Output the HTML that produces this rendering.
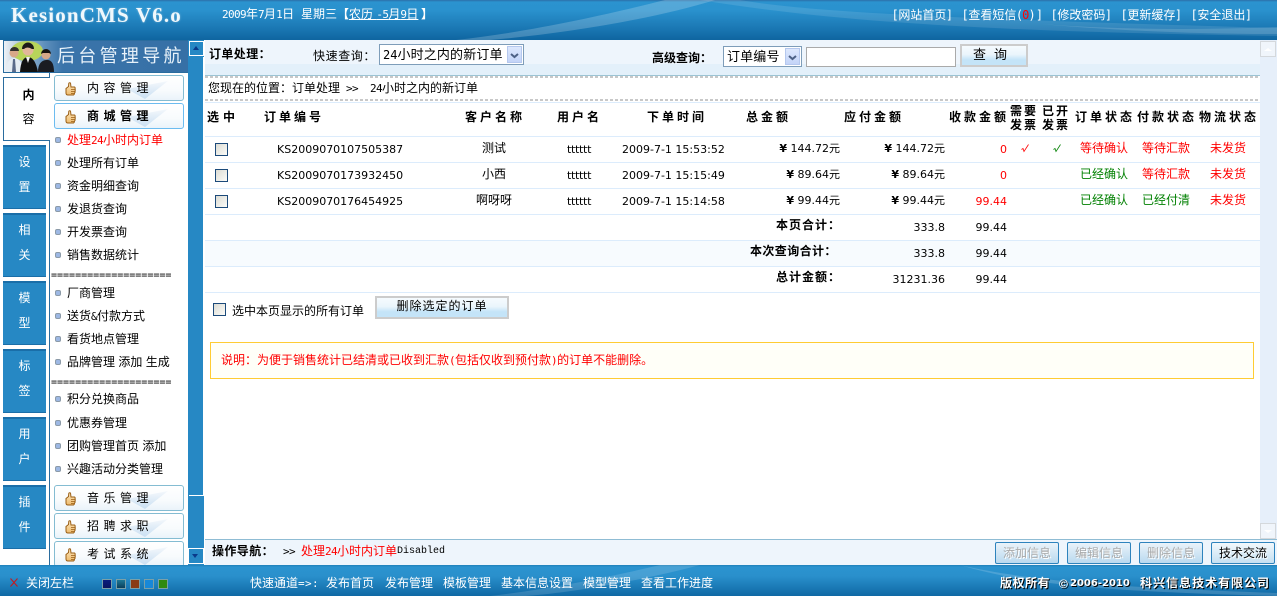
<!DOCTYPE html>
<html><head><meta charset="utf-8"><title>KesionCMS</title>
<style>
html,body{margin:0;padding:0;width:1277px;height:596px;overflow:hidden;background:#fff}
body{position:relative;font:12px/14px "Liberation Sans","WenQuanYi Zen Hei","Noto Sans CJK SC",sans-serif;color:#000}
div,span,svg{position:absolute;white-space:nowrap;display:block}
tt{font:11px/14px "DejaVu Sans Mono",monospace;letter-spacing:-.62px}
.k tt{letter-spacing:.1px;font-size:12px;margin:0 -.5px}
.a{position:absolute}
.b{font-weight:bold}
.h{font-weight:bold;letter-spacing:3px;top:110px}
.n{font-family:"DejaVu Sans",sans-serif;font-size:11px}
.r{color:#f00}.g{color:#008000}.w{color:#fff}
.tab{left:3px;width:43px;height:61px;background:#2688c4;border-top:2px solid #1a6ea8;border-bottom:1px solid #1a6ea8;color:#fff;text-align:center;line-height:30px}
.tab span{position:static;display:block}
.tab span+span{margin-top:-5px}
.mb{left:54px;width:128px;height:24px;border:1px solid #84bcd2;border-radius:3px;background:linear-gradient(#fff 0,#f8fbfd 60%,#eaf3fa);overflow:hidden}
.mb b{position:absolute;left:32px;top:5px;font-weight:normal;letter-spacing:4.5px;z-index:2}
.mb svg.t{left:10px;top:6px;z-index:2}
.mb svg.s{left:0;top:0}
.bu{left:55px;width:6px;height:6px;background:#9db8e4;border:1px solid #8b9aa8;border-radius:2px;box-sizing:border-box}
.ln{left:205px;width:1055px;height:1px;background:#dcecfc}
.cb{width:13px;height:13px;box-sizing:border-box;border:1px solid #1c4a7a;background:linear-gradient(135deg,#dcdcd4,#fbfbf8)}
.btn{background:linear-gradient(#f6fbfe 0,#eaf5fc 45%,#c4e4f8 72%,#c4e4f8);border:2px solid #ccc;box-sizing:border-box;text-align:center}
.nb{top:542px;width:64px;height:22px;box-sizing:border-box;border:1px solid #2e83bd;border-radius:2px;background:linear-gradient(#eaf3fa,#b9d9ef);color:#aaa;text-align:center;line-height:20px;text-shadow:1px 1px 0 #fff}
.sel{background:#fff;border:1px solid #7e9db9;box-sizing:border-box;font-size:13px;letter-spacing:.15px}
.ar{right:1px;top:1px;bottom:1px;width:15px;background:linear-gradient(#dde8fd,#c3d4f8);border:1px solid #b5c8ee;box-sizing:border-box}
.dash{left:205px;width:1055px;height:2px;background:repeating-linear-gradient(90deg,#c8c8c8 0 3px,#fff 3px 5px)}
.sq{top:579px;width:10px;height:10px;border:1px solid #7aa0a8;box-sizing:border-box}
.cp{top:576px;font-weight:bold;color:#fff;text-shadow:1px 1px 0 #000}
</style></head><body>

<svg width="0" height="0" style="left:0;top:0"><defs>
<linearGradient id="sw" x1="0" x2="0" y1="0" y2="1"><stop offset="0" stop-color="#f4f8fc"/><stop offset="1" stop-color="#c9dff2"/></linearGradient>
<linearGradient id="th" x1="0" x2="0" y1="0" y2="1"><stop offset="0" stop-color="#fbe7bf"/><stop offset="1" stop-color="#eebb6e"/></linearGradient>
<symbol id="tm" viewBox="0 0 11 14"><path d="M1 6.500L3.500 4.500L3.800 1.200Q4.500 .4 5.500 1L6 5H9.500Q10.500 5.500 10 7Q10.600 8 10 9Q10.400 10.500 9.500 11Q9.600 12.500 8.500 13H3Q1 13 1 11Z" fill="url(#th)" stroke="#9a5e14"/><path d="M6 7.500H10M6 9.500H10M6 11.500H9" stroke="#9a5e14" stroke-width=".8" fill="none"/></symbol>
<symbol id="sm" viewBox="0 0 128 24"><path d="M72 13L113 5L90 23Z" fill="url(#sw)"/></symbol>
</defs></svg>

<!-- header -->
<div style="left:0;top:0;width:1277px;height:40px;background:linear-gradient(#2c6fa8 0,#2b93cf 2px,#2a92ce 25%,#1b78b4 70%,#0f65a0);overflow:hidden">
<svg width="1277" height="40" style="left:0;top:0"><path d="M456 40C530 32 610 14 665 0H715C650 20 560 34 490 40Z" fill="#fff" opacity=".2"/><path d="M740 0C820 14 1000 20 1277 28V36C1040 32 860 26 700 0Z" fill="#fff" opacity=".11"/><path d="M1040 24C1120 30 1200 30 1277 27V34C1190 34 1110 30 1040 24Z" fill="#fff" opacity=".14"/></svg>
</div>
<span class="w b" style="left:11px;top:4px;font:bold 21px/22px 'Liberation Serif',serif;letter-spacing:1.150px;color:#f0f8fc;text-shadow:0 0 2px rgba(255,255,255,.4)">KesionCMS V6.o</span>
<span class="w" style="left:222px;top:7px"><tt>2009</tt>年<tt>7</tt>月<tt>1</tt>日</span>
<span class="w" style="left:301px;top:7px">星期三</span>
<span class="w b" style="left:337px;top:7px">【</span>
<span class="w" style="left:349px;top:7px"><u>农历 <tt>-5</tt>月<tt>9</tt>日</u></span>
<span class="w b" style="left:421px;top:7px">】</span>
<span class="w k" style="left:892px;top:8px"><tt>[</tt>网站首页<tt>]</tt></span>
<span class="w k" style="left:962px;top:8px"><tt>[</tt>查看短信<tt>(</tt><tt class="r">0</tt><tt>)]</tt></span>
<span class="w k" style="left:1051px;top:8px"><tt>[</tt>修改密码<tt>]</tt></span>
<span class="w k" style="left:1121px;top:8px"><tt>[</tt>更新缓存<tt>]</tt></span>
<span class="w k" style="left:1191px;top:8px"><tt>[</tt>安全退出<tt>]</tt></span>

<!-- logo -->
<div style="left:3px;top:40px;width:186px;height:33px;background:linear-gradient(90deg,#eef2f6 0,#a8c0d8 10%,#5f90bc 22%,#3a74aa 32%,#3670a6);border:1px solid #2a6c9e;box-sizing:border-box;overflow:hidden">
<svg width="52" height="31" style="left:0;top:0"><ellipse cx="23" cy="10" rx="16" ry="10" fill="#b8d45a"/><circle cx="10" cy="12" r="4.500" fill="#d8a888"/><path d="M6 10a4.500 4 0 0 1 9 0z" fill="#33302c"/><path d="M2 31q0-13 8-14 9 1 9 14z" fill="#e6edf4"/><path d="M9 18h2l1 13H8z" fill="#5a6a8a"/><circle cx="24" cy="9" r="5.500" fill="#e2b79a"/><path d="M18 8a6 6.500 0 0 1 12 0l-2 0q-5-3-8 0z" fill="#1e1a18"/><path d="M16 31q1-15 8-15t10 15z" fill="#111"/><path d="M22 16h4l-2 6z" fill="#f4f4f4"/><circle cx="42" cy="14" r="4.500" fill="#d8a888"/><path d="M37 13a5 5 0 0 1 10 0l-2-1h-6z" fill="#181410"/><path d="M34 31q0-11 8-12t8 12z" fill="#1a1c22"/></svg>
</div>
<span class="w" style="left:57px;top:45px;font-size:18px;line-height:22px;letter-spacing:3.300px;color:#e8f2fa">后台管理导航</span>

<!-- tabs -->
<div style="left:3px;top:77px;width:47px;height:64px;box-sizing:border-box;border:1px solid #2a6c9e;border-right:0;background:#fff;z-index:2;text-align:center;line-height:24px;font-weight:bold;padding-top:5px;padding-left:3px"><span style="position:static">内</span><span style="position:static;font-weight:normal">容</span></div>
<div class="a" style="left:49px;top:72px;width:1px;height:493px;background:#2a6c9e"></div>
<div class="tab" style="top:145px"><span>设</span><span>置</span></div>
<div class="tab" style="top:213px"><span>相</span><span>关</span></div>
<div class="tab" style="top:281px"><span>模</span><span>型</span></div>
<div class="tab" style="top:349px"><span>标</span><span>签</span></div>
<div class="tab" style="top:417px"><span>用</span><span>户</span></div>
<div class="tab" style="top:485px"><span>插</span><span>件</span></div>

<!-- left menu -->
<div class="mb" style="top:75px"><svg class="s" width="128" height="24"><use href="#sm"/></svg><svg class="t" width="11" height="14"><use href="#tm"/></svg><b>内容管理</b></div>
<div class="mb" style="top:103px;border-color:#6cbcf0"><svg class="s" width="128" height="24"><use href="#sm"/></svg><svg class="t" width="11" height="14"><use href="#tm"/></svg><b style="font-weight:bold">商城管理</b></div>

<div class="bu" style="top:137px"></div><span class="r" style="left:67px;top:133px">处理<tt>24</tt>小时内订单</span>
<div class="bu" style="top:160px"></div><span style="left:67px;top:156px">处理所有订单</span>
<div class="bu" style="top:183px"></div><span style="left:67px;top:179px">资金明细查询</span>
<div class="bu" style="top:206px"></div><span style="left:67px;top:202px">发退货查询</span>
<div class="bu" style="top:229px"></div><span style="left:67px;top:225px">开发票查询</span>
<div class="bu" style="top:252px"></div><span style="left:67px;top:248px">销售数据统计</span>
<span style="left:51px;top:269px;font-family:'DejaVu Sans Mono','Liberation Mono',monospace;font-size:10px;letter-spacing:0">====================</span>
<div class="bu" style="top:290px"></div><span style="left:67px;top:286px">厂商管理</span>
<div class="bu" style="top:313px"></div><span style="left:67px;top:309px">送货<tt>&amp;</tt>付款方式</span>
<div class="bu" style="top:336px"></div><span style="left:67px;top:332px">看货地点管理</span>
<div class="bu" style="top:359px"></div><span style="left:67px;top:355px">品牌管理 <tt> </tt>添加 <tt> </tt>生成</span>
<span style="left:51px;top:376px;font-family:'DejaVu Sans Mono','Liberation Mono',monospace;font-size:10px">====================</span>
<div class="bu" style="top:396px"></div><span style="left:67px;top:392px">积分兑换商品</span>
<div class="bu" style="top:420px"></div><span style="left:67px;top:416px">优惠券管理</span>
<div class="bu" style="top:443px"></div><span style="left:67px;top:439px">团购管理首页 <tt> </tt>添加</span>
<div class="bu" style="top:466px"></div><span style="left:67px;top:462px">兴趣活动分类管理</span>
<div class="mb" style="top:485px"><svg class="s" width="128" height="24"><use href="#sm"/></svg><svg class="t" width="11" height="14"><use href="#tm"/></svg><b>音乐管理</b></div>
<div class="mb" style="top:513px"><svg class="s" width="128" height="24"><use href="#sm"/></svg><svg class="t" width="11" height="14"><use href="#tm"/></svg><b>招聘求职</b></div>
<div style="left:54px;top:541px;width:130px;height:24px;overflow:hidden"><div class="mb" style="left:0;top:0"><svg class="s" width="128" height="24"><use href="#sm"/></svg><svg class="t" width="11" height="14"><use href="#tm"/></svg><b>考试系统</b></div></div>

<!-- left scrollbar -->
<div style="left:188px;top:40px;width:16px;height:525px;background:#2688c4"></div>
<div style="left:189px;top:41px;width:15px;height:15px;border:1px solid #fff;box-sizing:border-box;background:#2688c4"><div style="left:3px;top:4px;width:0;height:0;border:3px solid transparent;border-bottom:4px solid #0a3a8a;border-top:0"></div></div>
<div style="left:189px;top:57px;width:15px;height:439px;background:#2688c4;border-right:1px solid #fff;border-bottom:1px solid #fff;box-sizing:border-box"></div>
<div style="left:204px;top:40px;width:1px;height:525px;background:#fff"></div>
<div style="left:188px;top:548px;width:16px;height:16px;border:1px solid #fff;box-sizing:border-box;background:#2688c4"><div style="left:3px;top:5px;width:0;height:0;border:3px solid transparent;border-top:4px solid #0a3a8a;border-bottom:0"></div></div>

<!-- toolbar -->
<div style="left:205px;top:40px;width:1055px;height:24px;background:#eef5fc"></div>
<div style="left:205px;top:64px;width:1055px;height:11px;background:#e3f0fa"></div>
<div style="left:205px;top:75px;width:1055px;height:1px;background:#9cc4d4"></div>
<div class="dash" style="top:76px"></div>
<div class="dash" style="top:99px"></div>
<span class="b" style="left:209px;top:47px;letter-spacing:.4px">订单处理：</span>
<span style="left:313px;top:49px;letter-spacing:.6px">快速查询：</span>
<div class="sel" style="left:379px;top:44px;width:145px;height:21px"><span style="left:3px;top:3px"><tt style="font-size:12px;letter-spacing:0">24</tt>小时之内的新订单</span><div class="ar"><svg width="9" height="6" style="left:2px;top:6px"><path d="M1 1l3.500 3L8 1" fill="none" stroke="#4d6185" stroke-width="2"/></svg></div></div>
<span class="b" style="left:652px;top:51px">高级查询：</span>
<div class="sel" style="left:723px;top:46px;width:79px;height:21px"><span style="left:3px;top:3px">订单编号</span><div class="ar"><svg width="9" height="6" style="left:2px;top:6px"><path d="M1 1l3.500 3L8 1" fill="none" stroke="#4d6185" stroke-width="2"/></svg></div></div>
<div style="left:806px;top:47px;width:150px;height:20px;background:#fff;border:1px solid #aaa;box-sizing:border-box"></div>
<div class="btn" style="left:960px;top:44px;width:68px;height:23px;line-height:18px;font-size:13px;letter-spacing:8px">查询</div>

<!-- breadcrumb -->
<span style="left:208px;top:81px">您现在的位置：订单处理</span>
<span style="left:346px;top:81px"><tt>&gt;&gt;</tt></span>
<span style="left:370px;top:81px"><tt>24</tt>小时之内的新订单</span>

<!-- table lines -->
<div class="a" style="left:205px;top:241px;width:1055px;height:25px;background:#f7fbfe"></div>
<div class="ln" style="top:136px"></div><div class="ln" style="top:162px"></div><div class="ln" style="top:188px"></div><div class="ln" style="top:214px"></div><div class="ln" style="top:240px"></div><div class="ln" style="top:266px"></div><div class="ln" style="top:292px"></div>
<div class="ln" style="top:102px"></div>

<!-- table head -->
<span class="h" style="left:207px;letter-spacing:4px">选中</span>
<span class="h" style="left:264px">订单编号</span>
<span class="h" style="left:465px">客户名称</span>
<span class="h" style="left:557px">用户名</span>
<span class="h" style="left:647px">下单时间</span>
<span class="h" style="left:746px">总金额</span>
<span class="h" style="left:844px">应付金额</span>
<span class="h" style="left:949px">收款金额</span>
<span class="b" style="left:1010px;top:104px;letter-spacing:2px;line-height:14px;white-space:normal;width:30px">需要发票</span>
<span class="b" style="left:1042px;top:104px;letter-spacing:2px;line-height:14px;white-space:normal;width:30px">已开发票</span>
<span class="h" style="left:1075px">订单状态</span>
<span class="h" style="left:1137px">付款状态</span>
<span class="h" style="left:1199px">物流状态</span>

<!-- rows -->
<div class="cb" style="left:215px;top:143px"></div><div class="cb" style="left:215px;top:169px"></div><div class="cb" style="left:215px;top:195px"></div>
<span class="n" style="left:277px;top:143px">KS2009070107505387</span>
<span class="n" style="left:277px;top:169px">KS2009070173932450</span>
<span class="n" style="left:277px;top:195px">KS2009070176454925</span>
<span style="left:482px;top:141px">测试</span><span style="left:482px;top:167px">小西</span><span style="left:476px;top:193px">啊呀呀</span>
<span class="n" style="left:567px;top:143px;letter-spacing:-.3px">tttttt</span><span class="n" style="left:567px;top:169px;letter-spacing:-.3px">tttttt</span><span class="n" style="left:567px;top:195px;letter-spacing:-.3px">tttttt</span>
<span class="n" style="left:622px;top:143px">2009-7-1 15:53:52</span>
<span class="n" style="left:622px;top:169px">2009-7-1 15:15:49</span>
<span class="n" style="left:622px;top:195px">2009-7-1 15:14:58</span>
<span class="n" style="right:437px;top:142px"><b>¥</b> 144.72元</span>
<span class="n" style="right:437px;top:168px"><b>¥</b> 89.64元</span>
<span class="n" style="right:437px;top:194px"><b>¥</b> 99.44元</span>
<span class="n" style="right:332px;top:142px"><b>¥</b> 144.72元</span>
<span class="n" style="right:332px;top:168px"><b>¥</b> 89.64元</span>
<span class="n" style="right:332px;top:194px"><b>¥</b> 99.44元</span>
<span class="n r" style="right:270px;top:143px">0</span>
<span class="n r" style="right:270px;top:169px">0</span>
<span class="n r" style="right:270px;top:195px">99.44</span>
<svg width="8" height="9" style="left:1021px;top:144px"><path d="M.5 5.500L2 4.500L3 7.500L7.500 .5" fill="none" stroke="#f00" stroke-width=".8"/></svg>
<svg width="8" height="9" style="left:1053px;top:144px"><path d="M.5 5.500L2 4.500L3 7.500L7.500 .5" fill="none" stroke="#008000" stroke-width=".8"/></svg>
<span class="r" style="left:1080px;top:141px">等待确认</span><span class="r" style="left:1142px;top:141px">等待汇款</span><span class="r" style="left:1210px;top:141px">未发货</span>
<span class="g" style="left:1080px;top:167px">已经确认</span><span class="r" style="left:1142px;top:167px">等待汇款</span><span class="r" style="left:1210px;top:167px">未发货</span>
<span class="g" style="left:1080px;top:193px">已经确认</span><span class="g" style="left:1142px;top:193px">已经付清</span><span class="r" style="left:1210px;top:193px">未发货</span>

<!-- totals -->
<span class="b" style="left:776px;top:218px;letter-spacing:1px">本页合计：</span>
<span class="b" style="left:750px;top:244px;letter-spacing:.4px">本次查询合计：</span>
<span class="b" style="left:776px;top:270px;letter-spacing:1px">总计金额：</span>
<span class="n" style="right:332px;top:221px">333.8</span><span class="n" style="right:270px;top:221px">99.44</span>
<span class="n" style="right:332px;top:247px">333.8</span><span class="n" style="right:270px;top:247px">99.44</span>
<span class="n" style="right:332px;top:273px">31231.36</span><span class="n" style="right:270px;top:273px">99.44</span>

<div class="cb" style="left:213px;top:303px"></div>
<span style="left:232px;top:304px">选中本页显示的所有订单</span>
<div class="btn" style="left:375px;top:296px;width:134px;height:23px;line-height:17px;letter-spacing:1px">删除选定的订单</div>

<div style="left:210px;top:342px;width:1044px;height:37px;box-sizing:border-box;border:1px solid #fc3;background:#fffff8"></div>
<span class="r" style="left:221px;top:353px">说明：为便于销售统计已结清或已收到汇款<tt>(</tt>包括仅收到预付款<tt>)</tt>的订单不能删除。</span>

<!-- right scrollbar -->
<div style="left:1260px;top:40px;width:17px;height:499px;background:#e6effa"></div>
<div style="left:1260px;top:41px;width:16px;height:16px;border:1px solid #d4d8dc;box-sizing:border-box;background:#f0f5fb"><div style="left:3px;top:6px;width:0;height:0;border:4px solid transparent;border-bottom:3px solid #fff;border-top:0"></div></div>
<div style="left:1260px;top:523px;width:16px;height:16px;border:1px solid #d4d8dc;box-sizing:border-box;background:#f0f5fb"><div style="left:3px;top:6px;width:0;height:0;border:4px solid transparent;border-top:3px solid #fff;border-bottom:0"></div></div>

<!-- bottom nav -->
<div style="left:205px;top:539px;width:1072px;height:26px;background:#eef5fc;border-top:1px solid #8fbcd4;box-sizing:border-box"></div>
<span class="b" style="left:212px;top:544px;letter-spacing:.4px">操作导航：</span>
<span style="left:283px;top:544px"><tt>&gt;&gt;</tt></span>
<span class="r" style="left:301px;top:544px">处理<tt>24</tt>小时内订单</span>
<span style="left:397px;top:545px;font:10px/14px 'Liberation Mono',monospace">Disabled</span>
<div class="nb" style="left:995px">添加信息</div>
<div class="nb" style="left:1067px">编辑信息</div>
<div class="nb" style="left:1139px">删除信息</div>
<div class="nb" style="left:1211px;color:#000;background:linear-gradient(#f2f8fc,#c4e0f2)">技术交流</div>

<!-- footer -->
<div style="left:0;top:565px;width:1277px;height:31px;background:linear-gradient(#1f7fb8 0,#2b93cf 2px,#2a90cc 35%,#0f68a4);overflow:hidden">
<svg width="1277" height="31" style="left:0;top:0"><path d="M490 31C550 24 610 12 660 0H700C640 16 570 28 525 31Z" fill="#fff" opacity=".14"/><path d="M960 0C1020 14 1100 22 1277 28V31C1090 26 1020 18 960 0Z" fill="#fff" opacity=".16"/></svg>
</div>
<svg width="8" height="9" style="left:10px;top:578px"><path d="M.5 .5l7 8M7.500 .5l-7 8" stroke="#c8181c" stroke-width="1" fill="none"/></svg>
<span class="w" style="left:26px;top:576px">关闭左栏</span>
<div class="sq" style="left:102px;background:linear-gradient(#0a1e7e,#0a1660)"></div>
<div class="sq" style="left:116px;background:linear-gradient(#1d7896,#0b3e5a)"></div>
<div class="sq" style="left:130px;background:#8a3c14"></div>
<div class="sq" style="left:144px;background:#1888d8"></div>
<div class="sq" style="left:158px;background:#2f8a10"></div>
<span class="w" style="left:250px;top:576px">快速通道<tt style="letter-spacing:.4px">=&gt;:</tt></span>
<span class="w" style="left:326px;top:576px">发布首页</span>
<span class="w" style="left:385px;top:576px">发布管理</span>
<span class="w" style="left:443px;top:576px">模板管理</span>
<span class="w" style="left:501px;top:576px">基本信息设置</span>
<span class="w" style="left:583px;top:576px">模型管理</span>
<span class="w" style="left:641px;top:576px">查看工作进度</span>
<span class="cp" style="left:1000px;letter-spacing:.5px">版权所有</span>
<span class="cp" style="left:1059px;top:577px">©</span>
<span class="cp" style="left:1070px;top:577px;font-family:'DejaVu Sans',sans-serif;font-size:10px">2006-2010</span>
<span class="cp" style="left:1140px;letter-spacing:1px">科兴信息技术有限公司</span>
</body></html>
